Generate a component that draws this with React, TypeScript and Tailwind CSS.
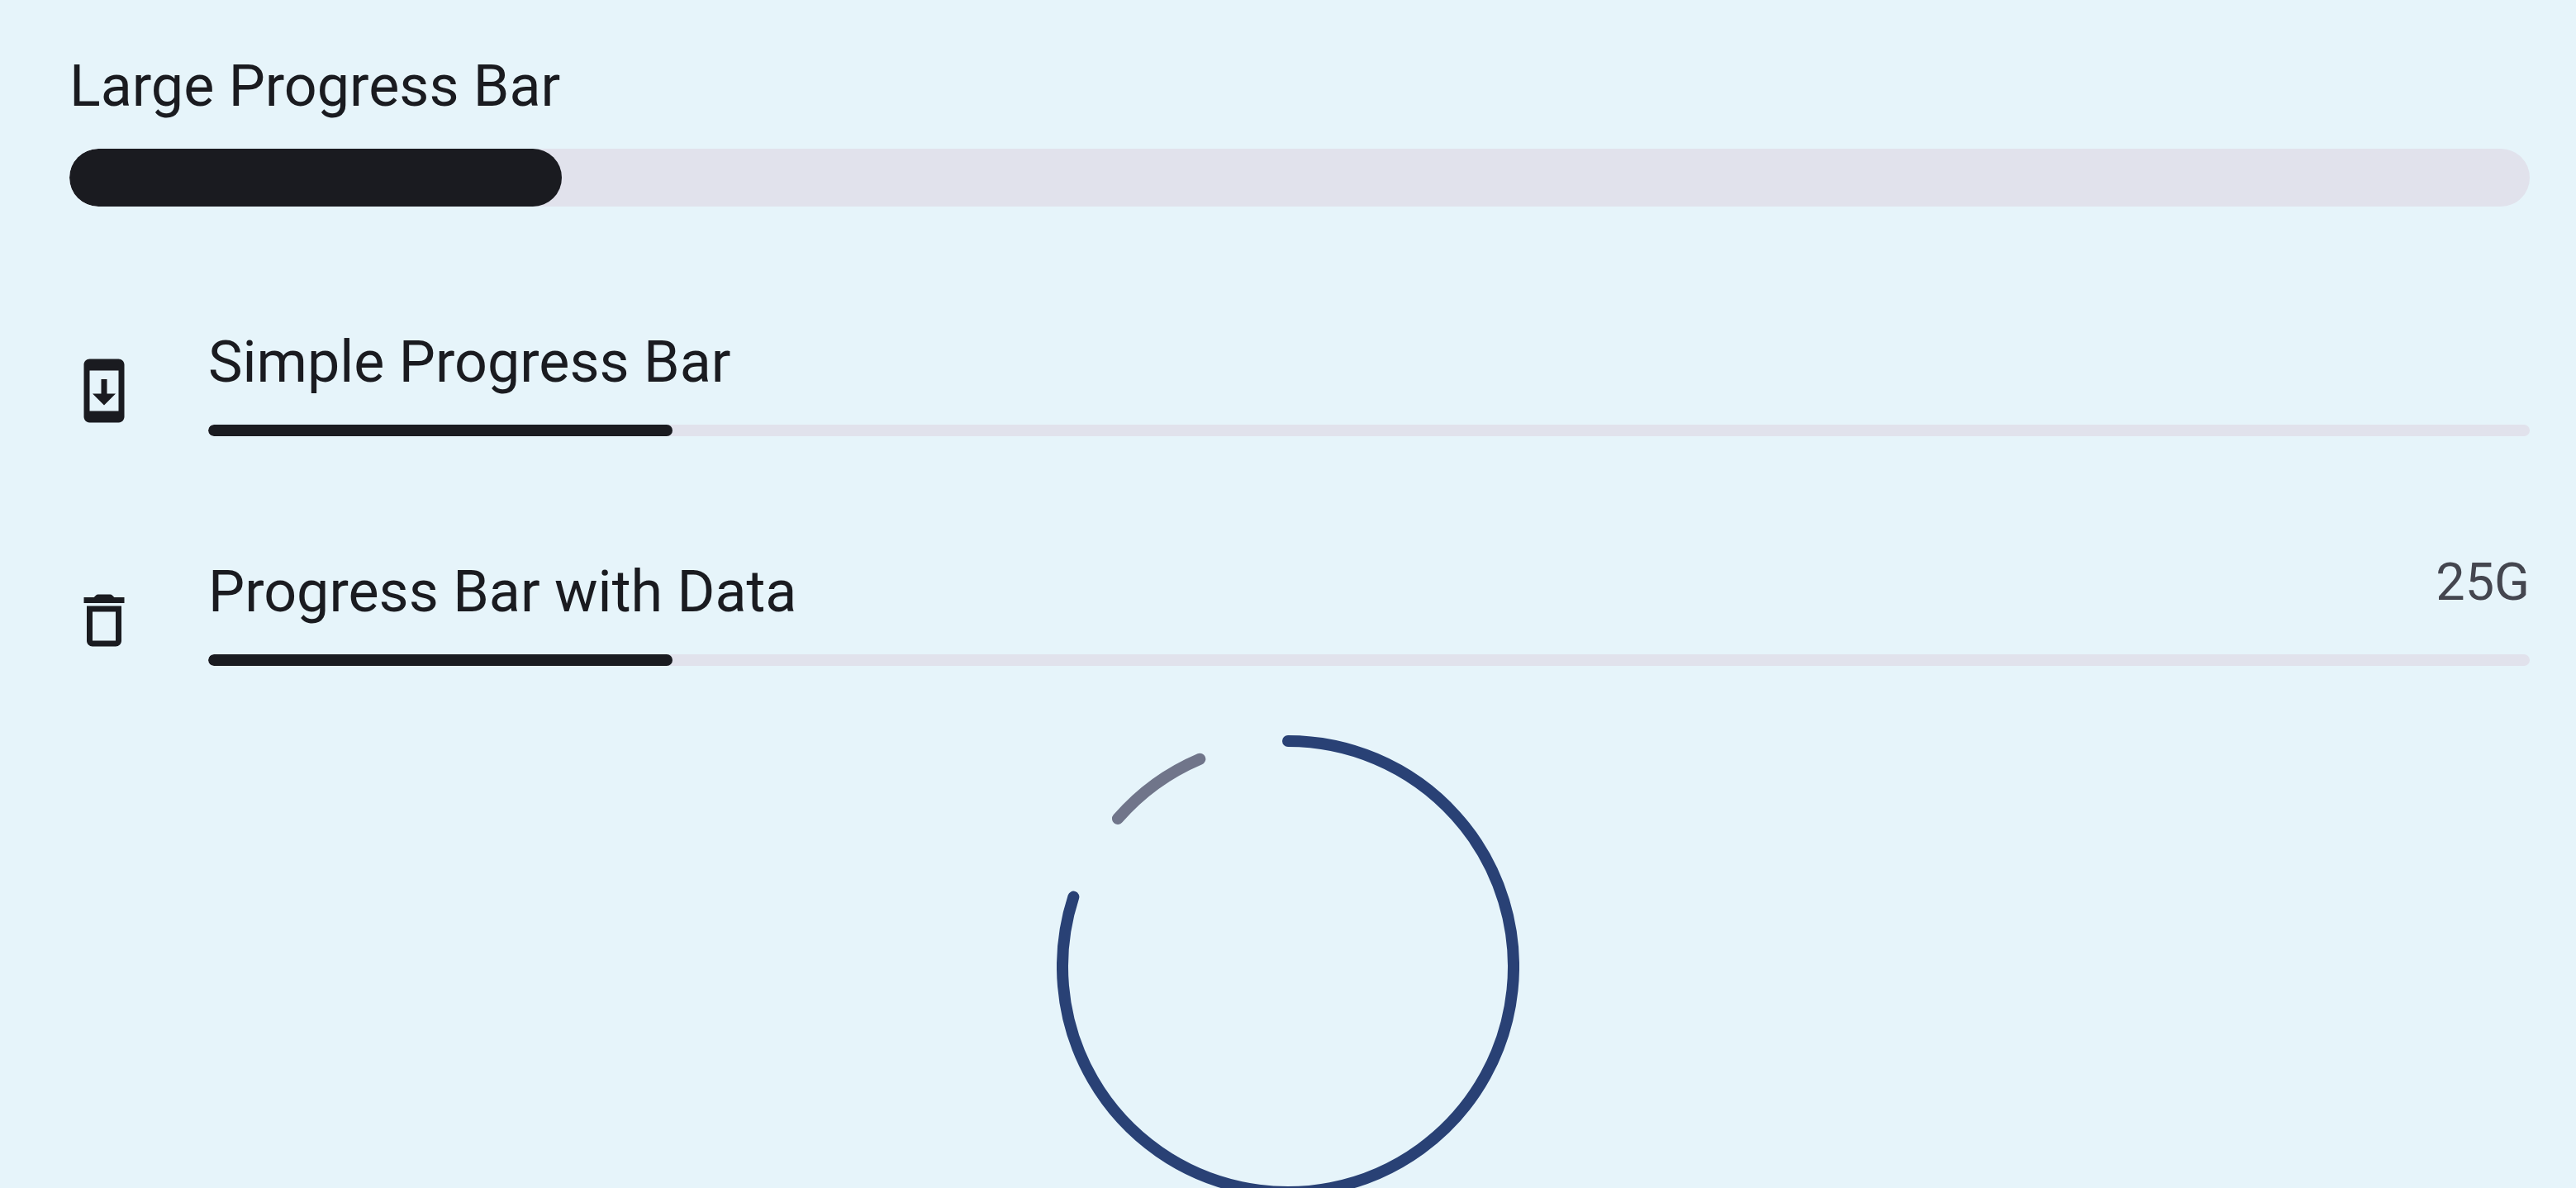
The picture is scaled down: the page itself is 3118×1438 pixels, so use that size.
import { useId } from "react";
import type { ReactNode } from "react";
import { MdSystemUpdate } from "react-icons/md";

function DeleteIcon() {
  return (
    <svg viewBox="0 0 24 24" fill="currentColor" className="size-[84px]" aria-hidden="true">
      <path d="M6 19c0 1.1.9 2 2 2h8c1.1 0 2-.9 2-2V7H6v12zM8 9h8v10H8V9zM15.5 4l-.71-.71c-.18-.18-.44-.29-.7-.29H9.91c-.26 0-.52.11-.7.29L8.5 4H5v2h14V4h-3.5z" />
    </svg>
  );
}

function Bar({ id, value, large = false }: { id: string; value: number; large?: boolean }) {
  return (
    <progress
      id={id}
      value={value}
      max={100}
      className={
        "block w-full appearance-none overflow-hidden rounded-full bg-[#e1e2ec] [&::-webkit-progress-bar]:bg-[#e1e2ec] [&::-webkit-progress-value]:rounded-full [&::-webkit-progress-value]:bg-[#1a1b20] " +
        (large ? "h-[70px]" : "h-[14px]")
      }
    />
  );
}

function ProgressRow({ icon, title, value, data }: { icon: ReactNode; title: string; value: number; data?: string }) {
  const id = useId();
  return (
    <section className="flex items-end gap-[84px]">
      <div className="shrink-0 pb-[13px]">{icon}</div>
      <div className="min-w-0 flex-1">
        <div className="flex items-start justify-between pb-[34px]">
          <label htmlFor={id} className="pt-2 text-[70px] leading-[84px]">
            {title}
          </label>
          {data && <span className="text-[63px] leading-[78px] text-[#44464f]">{data}</span>}
        </div>
        <Bar id={id} value={value} />
      </div>
    </section>
  );
}

/** Arc on a ring of radius 78 centred in a 160 unit box; angles run clockwise from the top. */
function arc(from: number, to: number) {
  const point = (deg: number) => {
    const a = (deg * Math.PI) / 180;
    return `${80 + 78 * Math.sin(a)} ${80 - 78 * Math.cos(a)}`;
  };
  return `M${point(from)}A78 78 0 ${to - from > 180 ? 1 : 0} 1 ${point(to)}`;
}

function CircularProgress() {
  return (
    <svg viewBox="0 0 160 160" className="size-[560px]" role="img" aria-label="Circular progress, 80%">
      <g fill="none" strokeWidth="4" strokeLinecap="round">
        <path d={arc(311, 337)} stroke="#70758a" />
        <path d={arc(0, 288)} stroke="#294175" />
      </g>
    </svg>
  );
}

export default function App() {
  const id = useId();
  return (
    <main className="min-h-screen bg-[#e6f4fa] pt-[62px] pr-14 pl-[84px] font-['Roboto',sans-serif] text-[#1a1b20]">
      <div className="flex flex-col gap-[138px]">
        <section>
          <label htmlFor={id} className="block pb-[34px] text-[70px] leading-[84px]">
            Large Progress Bar
          </label>
          <Bar id={id} value={20} large />
        </section>
        <ProgressRow icon={<MdSystemUpdate className="size-[84px]" aria-hidden="true" />} title="Simple Progress Bar" value={20} />
        <ProgressRow icon={<DeleteIcon />} title="Progress Bar with Data" value={20} data="25G" />
      </div>
      <div className="-mr-14 -ml-[84px] flex justify-center pt-[84px]">
        <CircularProgress />
      </div>
    </main>
  );
}
